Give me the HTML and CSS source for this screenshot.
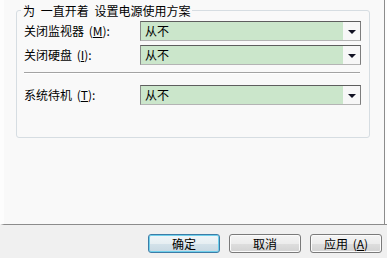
FILE: index.html
```html
<!DOCTYPE html>
<html lang="zh-CN">
<head>
<meta charset="utf-8">
<title>电源选项</title>
<link rel="stylesheet" href="styles.css">
</head>
<body>
<div class="window">
  <div class="top">
    <div class="panel">
      <div class="group">
        <span class="legend">为 一直开着 设置电源使用方案</span>
        <div class="row">
          <span class="label">关闭监视器 (<u>M</u>):</span>
          <div class="combo"><span class="value">从不</span><span class="drop"><i class="tri"></i></span></div>
        </div>
        <div class="row row2">
          <span class="label">关闭硬盘 (<u>I</u>):</span>
          <div class="combo"><span class="value">从不</span><span class="drop"><i class="tri"></i></span></div>
        </div>
        <div class="divider"></div>
        <div class="row">
          <span class="label">系统待机 (<u>T</u>):</span>
          <div class="combo"><span class="value">从不</span><span class="drop"><i class="tri"></i></span></div>
        </div>
      </div>
    </div>
    <div class="edge"></div>
  </div>
  <div class="buttons">
    <button class="btn default">确定</button>
    <button class="btn">取消</button>
    <button class="btn">应用 (<u>A</u>)</button>
  </div>
</div>
</body>
</html>
```

FILE: styles.css
```css
* { box-sizing: border-box; }
html, body { margin: 0; padding: 0; }
body {
  width: 387px;
  height: 258px;
  overflow: hidden;
  background: #f0f0f0;
  font-family: "Noto Sans CJK SC", "Liberation Sans", sans-serif;
  font-size: 12px;
  color: #000;
}
.window { display: flex; flex-direction: column; height: 258px; }
.top { display: flex; height: 225px; }
.panel {
  width: 385px;
  height: 225px;
  background: #f9f9f9;
  border-left: 4px solid #fdfdfd;
  border-right: 1px solid #8c8c8c;
  border-bottom: 1px solid #8c8c8c;
  padding: 10px 0 0 12px;
}
.edge { flex: 1; background: #fdfdfd; border-bottom: 1px solid #8c8c8c; }
.group {
  position: relative;
  width: 354px;
  height: 128px;
  border: 1px solid #d6dde2;
  border-radius: 3px;
  padding: 10px 8px 0 7px;
}
.legend {
  position: absolute;
  top: -8px;
  left: 4px;
  padding: 0 2px;
  background: #f9f9f9;
  line-height: 16px;
  white-space: nowrap;
  word-spacing: 3px;
}
.row { display: flex; align-items: center; height: 20px; }
.row2 { margin-top: 4px; }
.label { width: 116px; line-height: 20px; white-space: nowrap; word-spacing: 2px; }
u { text-decoration: underline; text-underline-offset: 1px; }
.combo {
  display: flex;
  width: 221px;
  height: 20px;
  border: 1px solid;
  border-color: #5e5e5e #7d7d7d #b4b4b4 #8a8a8a;
  background: #f7f7f7;
}
.value {
  flex: 1;
  background: #cbe6cb;
  padding-left: 4px;
  line-height: 18px;
}
.drop {
  width: 17px;
  display: flex;
  align-items: center;
  justify-content: center;
  background: #f7f7f7;
}
.tri {
  width: 0;
  height: 0;
  border-left: 4px solid transparent;
  border-right: 4px solid transparent;
  border-top: 4px solid #111122;
  margin-top: 1px;
}
.divider {
  margin: 7px 1px 11px 0;
  height: 2px;
  border-top: 1px solid #a3a3a3;
  border-bottom: 1px solid #ffffff;
}
.buttons {
  display: flex;
  justify-content: flex-end;
  gap: 9px;
  padding: 9px 5px 0 0;
}
.btn {
  width: 72px;
  height: 19px;
  padding: 0;
  font: inherit;
  font-size: 12px;
  line-height: 17px;
  color: #000;
  border: 1px solid #7a7a7a;
  border-radius: 3px;
  background: linear-gradient(#f4f4f4 0%, #ececec 50%, #dedede 51%, #d2d2d2 100%);
  box-shadow: inset 0 0 0 1px #fbfbfb;
  word-spacing: 2px;
}
.btn.default {
  border-color: #3d7ca6;
  box-shadow: inset 0 0 0 1px #6fd0ec;
  background: linear-gradient(#f0f6f9 0%, #e6eef2 50%, #d4e2ea 51%, #c8d8e2 100%);
}
```
